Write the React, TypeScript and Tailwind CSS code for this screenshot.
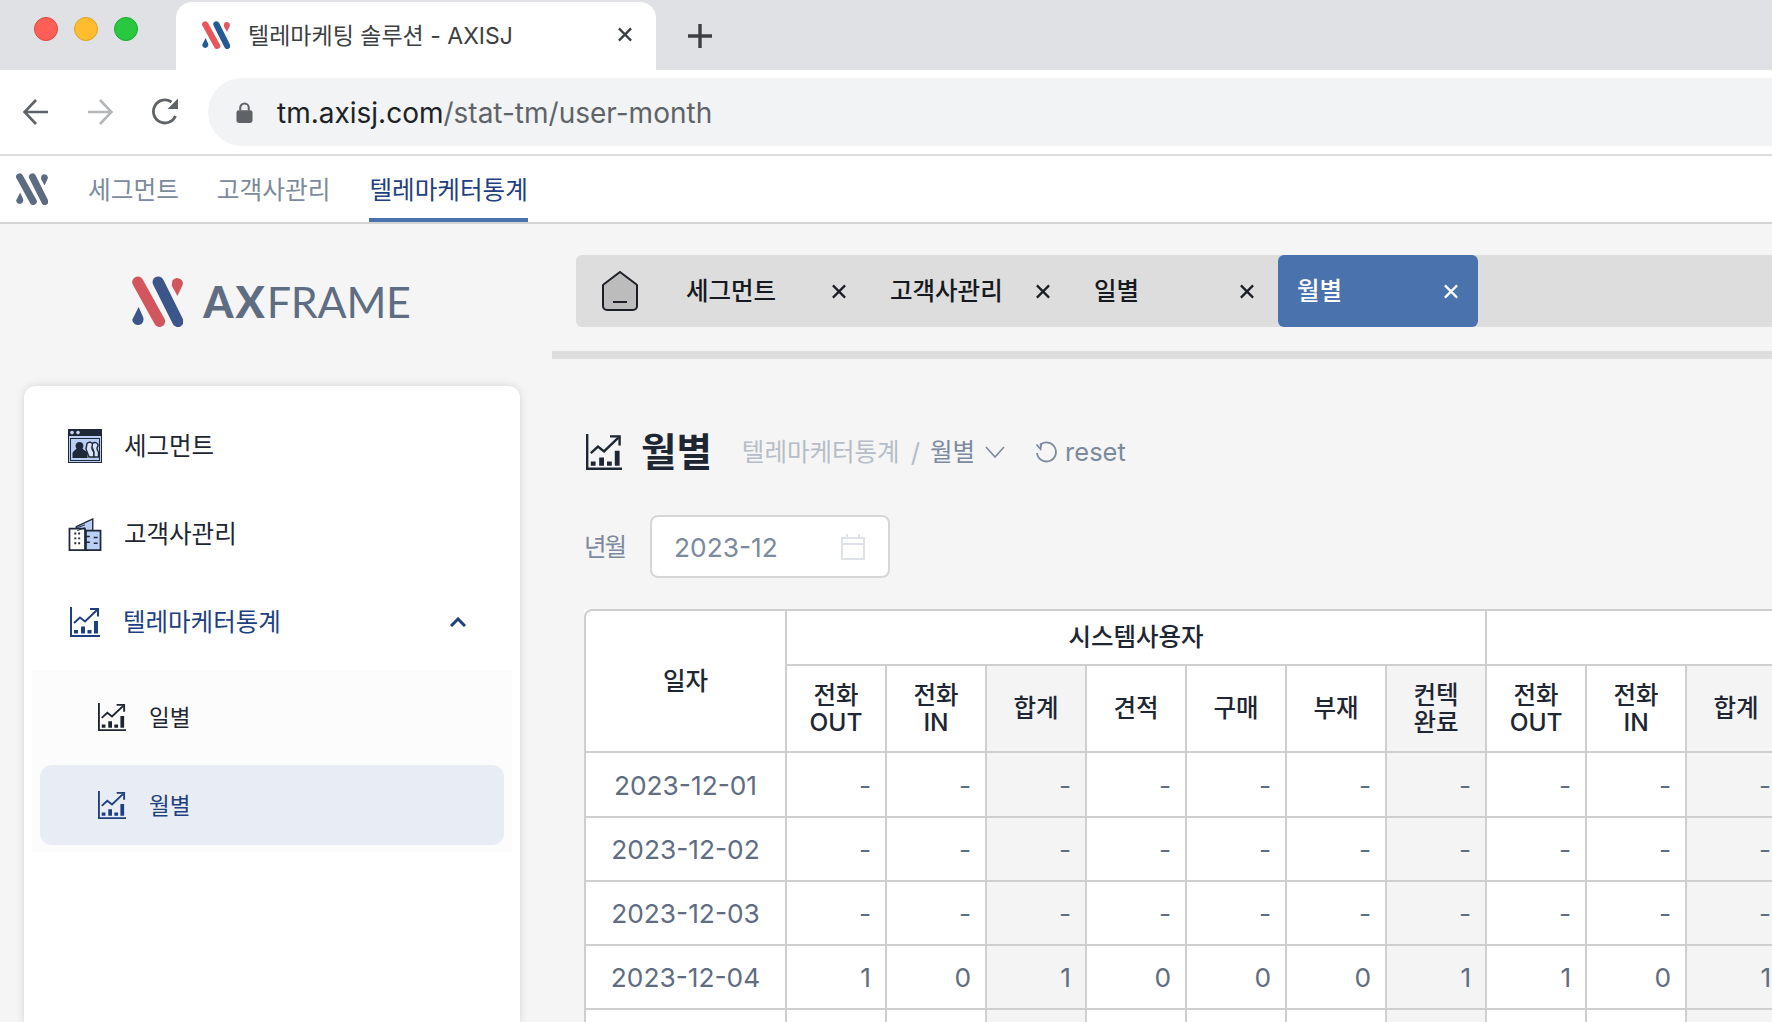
import React from "react";

const FONT = "font-[Inter,'Noto_Sans_CJK_KR',sans-serif]";

function LogoMark({ className, a, b }: { className?: string; a: string; b: string }) {
  return (
    <svg viewBox="0 0 50 50" className={className}>
      <line x1="5.7" y1="6" x2="27" y2="44.5" stroke={a} strokeWidth="11" strokeLinecap="round" />
      <line x1="25.7" y1="6" x2="45" y2="44.5" stroke={b} strokeWidth="11" strokeLinecap="round" />
      <path d="M39.6 4.5a5.6 5.6 0 0 1 10.2 3.8L44.6 19.5 39 9.5z" fill={a} />
      <path d="M6.5 30.5 10.8 40a5.6 5.6 0 1 1-10.6 3z" fill={b} />
    </svg>
  );
}

function ChartIcon({ className }: { className?: string }) {
  return (
    <svg viewBox="0 0 30 30" fill="none" stroke="currentColor" className={className}>
      <path d="M1 0V29H30" strokeWidth="2" />
      <path d="M4 16 10 10.500 15 14.500 27 3" strokeWidth="2" />
      <path d="M20 2H28V9.500" strokeWidth="2" />
      <path d="M4 23h4v3.500H4zM11 19.500h4v7h-4zM17.500 23h4v3.500h-4zM24 14h4v12.500h-4z" fill="currentColor" stroke="none" />
    </svg>
  );
}

function SegmentIcon() {
  return (
    <svg viewBox="0 0 34 34" className="h-[34px] w-[34px]">
      <rect x="0.500" y="0.500" width="33" height="33" fill="#b9cff5" stroke="#1e2838" />
      <rect x="0" y="0" width="34" height="7" fill="#1e2838" />
      <circle cx="4" cy="3.600" r="1.800" fill="#c9d6ee" />
      <circle cx="10" cy="3.600" r="1.800" fill="#c9d6ee" />
      <rect x="2.500" y="9.500" width="29" height="22" fill="none" stroke="#1e2838" strokeWidth="1" />
      <path d="M19 14.500a3.500 3.500 0 0 1 6 1c.3 2-1 2.500-1 4 0 2 2 2.500 2 4.500v4h-5l-3-8z" fill="#d9e4fa" stroke="#1e2838" strokeWidth="1.400" />
      <path d="M24.500 14.500a3.500 3.500 0 0 1 5.500 1c.3 2-1 2.500-1 4 0 2 1.500 2.500 1.500 4.500v4H26v-5l-2-5z" fill="#d9e4fa" stroke="#1e2838" strokeWidth="1.400" />
      <path d="M4.500 29v-5c0-1.500 3-3 4-4.500-1.500-1.500-1.500-6.500 3-6.500 4.500 0 4.500 5 3 6.500 1 1.500 5 3 5 4.500v5z" fill="#1e2838" />
    </svg>
  );
}

function BuildingIcon() {
  return (
    <svg viewBox="0 0 34 34" className="h-[33px] w-[34px]">
      <path d="M8 9 25 1v32H8z" fill="#b9cff5" stroke="#1e2838" strokeWidth="1.400" />
      <path d="M1 33V11h16v22z" fill="#ffffff" stroke="#1e2838" strokeWidth="1.800" />
      <path d="M18 13h15v20H18z" fill="#b9cff5" stroke="#1e2838" strokeWidth="1.800" />
      <path d="M6 15h2v2H6zM10 15h2v2h-2zM6 20h2v2H6zM10 20h2v2h-2zM6 25h2v2H6zM10 25h2v2h-2z" fill="#1e2838" />
      <path d="M18 19h4M18 25h4M26 20h4M26 26h4" stroke="#1e2838" strokeWidth="1.600" />
      <path d="M9 10l8-3M9 13l8-3" stroke="#1e2838" strokeWidth="1" />
    </svg>
  );
}

function CloseIcon({ color = "#1a1d24" }: { color?: string }) {
  return (
    <svg viewBox="0 0 16 16" className="h-[15px] w-[16px]" fill="none" stroke={color} strokeWidth="2.400">
      <path d="M1.500 1.500 14.500 14.500M14.500 1.500 1.500 14.500" />
    </svg>
  );
}

function BrowserBar() {
  return (
    <>
      <div className="flex h-[70px] items-start bg-[#dfe1e5]">
        <div className="flex w-[176px] items-center gap-4 pl-[34px] pt-[17px]">
          <span className="h-6 w-6 rounded-full border border-[#e0443e] bg-[#ff5f57]" />
          <span className="h-6 w-6 rounded-full border border-[#dea123] bg-[#febc2e]" />
          <span className="h-6 w-6 rounded-full border border-[#1aab29] bg-[#28c840]" />
        </div>
        <div className="mt-[2px] flex h-[68px] w-[480px] items-center rounded-t-2xl bg-white pb-[3px] pl-[26px] pr-[23px]">
          <LogoMark className="h-[28px] w-[28px]" a="#e8555a" b="#235b96" />
          <span className="ml-[18px] flex-1 pt-[3px] text-[23px] text-[#3c4043]">텔레마케팅 솔루션 - AXISJ</span>
          <CloseIcon color="#3c4043" />
        </div>
        <svg viewBox="0 0 24 24" className="ml-[32px] mt-[24px] h-6 w-6" fill="none" stroke="#3c4043" strokeWidth="3.400">
          <path d="M12 0V24M0 12H24" />
        </svg>
      </div>
      <div className="flex h-[86px] items-center border-b-2 border-[#dcdcdc] bg-white">
        <svg viewBox="0 0 26 26" className="ml-[23px] h-[26px] w-[26px]" fill="none" stroke="#5f6368" strokeWidth="2.600">
          <path d="M25 13H2M13 1 1.500 13 13 25" />
        </svg>
        <svg viewBox="0 0 26 26" className="ml-[38px] h-[26px] w-[26px]" fill="none" stroke="#b4b6b9" strokeWidth="2.600">
          <path d="M1 13H24M13 1 24.500 13 13 25" />
        </svg>
        <svg viewBox="0 0 28 28" className="ml-[38px] h-[28px] w-[28px]" fill="none" stroke="#5f6368" strokeWidth="2.800">
          <path d="M24.500 18A11.500 11.500 0 1 1 20.500 4" />
          <path d="M27 0.500V11H16.500z" fill="#5f6368" stroke="none" />
        </svg>
        <div className="ml-[29px] flex h-[68px] flex-1 items-center rounded-l-full bg-[#f1f3f4] pl-[28px]">
          <svg viewBox="0 0 18 22" className="h-[21px] w-[17px]">
            <path d="M4.500 9V6a4.500 4.500 0 0 1 9 0v3" fill="none" stroke="#5f6368" strokeWidth="2.200" />
            <rect x="0.500" y="8.500" width="17" height="13.500" rx="2.500" fill="#5f6368" />
          </svg>
          <span className="ml-[24px] pt-[1px] text-[28px] text-[#202124]">
            tm.axisj.com<span className="text-[#5f6368]">/stat-tm/user-month</span>
          </span>
        </div>
      </div>
    </>
  );
}

function TopNav() {
  return (
    <div className="flex h-[68px] items-stretch border-b-2 border-[#d4d4d4] bg-white">
      <LogoMark className="ml-[16px] mt-[17px] h-[32px] w-[32px]" a="#5d6b80" b="#5d6b80" />
      <div className="ml-[40px] flex items-center pt-[3px] text-[24.700px] text-[#7c8a9e]">세그먼트</div>
      <div className="ml-[38px] flex items-center pt-[3px] text-[24.700px] text-[#7c8a9e]">고객사관리</div>
      <div className="ml-[39px] flex items-center border-b-4 border-[#4a72ac] pt-[6px] text-[24.600px] text-[#1e4080]">텔레마케터통계</div>
    </div>
  );
}

function Sidebar() {
  return (
    <aside className="flex w-[552px] shrink-0 flex-col">
      <div className="flex h-[162px] shrink-0 items-center justify-center pb-[8px] pr-[9px]">
        <LogoMark className="h-[51px] w-[51px]" a="#d2565d" b="#3c5689" />
        <span className="ml-5 font-['Lato',sans-serif] text-[43px] leading-none tracking-[-0.2px] text-[#5f6d82]">
          <span className="font-black tracking-[2px]">AX</span>FRAME
        </span>
      </div>
      <div className="ml-6 flex w-[496px] flex-1 flex-col rounded-t-xl bg-white pt-4 shadow-[0_0_8px_rgba(0,0,0,0.14)]">
        <div className="flex h-[88px] items-center pl-11 text-[24.500px] text-[#1e2633]">
          <SegmentIcon />
          <span className="ml-[22px]">세그먼트</span>
        </div>
        <div className="flex h-[88px] items-center pl-11 text-[24.500px] text-[#1e2633]">
          <BuildingIcon />
          <span className="ml-[22px]">고객사관리</span>
        </div>
        <div className="flex h-[88px] items-center pl-[46px] pr-[54px] text-[24.500px] text-[#1e4080]">
          <ChartIcon className="h-[30px] w-[30px]" />
          <span className="ml-[23px] flex-1">텔레마케터통계</span>
          <svg viewBox="0 0 16 10" className="h-[10px] w-[16px]" fill="none" stroke="#1e4080" strokeWidth="3">
            <path d="M1 9 8 2l7 7" />
          </svg>
        </div>
        <div className="mx-2 mt-1 flex flex-col gap-2 bg-[#fcfcfc] px-2 py-[7px] text-[22.500px]">
          <div className="flex h-20 items-center rounded-xl pl-[58px] text-[#1e2633]">
            <ChartIcon className="h-[28px] w-[28px]" />
            <span className="ml-[23px] pt-[2px]">일별</span>
          </div>
          <div className="flex h-20 items-center rounded-xl bg-[#e8ecf4] pl-[58px] text-[#1e4080]">
            <ChartIcon className="h-[28px] w-[28px]" />
            <span className="ml-[23px] pt-[2px]">월별</span>
          </div>
        </div>
      </div>
    </aside>
  );
}

function PageTab({ label, active }: { label: string; active?: boolean }) {
  return (
    <div
      className={
        active
          ? "flex h-full w-[200px] shrink-0 items-center justify-between rounded-md bg-[#4a72ac] pl-[19px] pr-[19px] text-[24.500px] font-medium text-white"
          : "flex h-full w-[200px] shrink-0 items-center justify-between pl-[20px] pr-[19px] text-[24.500px] font-medium text-[#16191f]"
      }
    >
      <span>{label}</span>
      <CloseIcon color={active ? "#ffffff" : "#1a1d24"} />
    </div>
  );
}

const COLS = ["date", "a", "b", "c", "d", "e", "f", "g", "h", "i", "j"];

const ROWS: { date: string; v: string[] }[] = [
  { date: "2023-12-01", v: ["-", "-", "-", "-", "-", "-", "-", "-", "-", "-"] },
  { date: "2023-12-02", v: ["-", "-", "-", "-", "-", "-", "-", "-", "-", "-"] },
  { date: "2023-12-03", v: ["-", "-", "-", "-", "-", "-", "-", "-", "-", "-"] },
  { date: "2023-12-04", v: ["1", "0", "1", "0", "0", "0", "1", "1", "0", "1"] },
  { date: "", v: ["", "", "", "", "", "", "", "", "", ""] },
];

const SHADED = [2, 6, 9];
const HEADERS = ["전화\nOUT", "전화\nIN", "합계", "견적", "구매", "부재", "컨텍\n완료", "전화\nOUT", "전화\nIN", "합계"];

function DataTable() {
  const line = "border-[#cfcfcf] border-r-2 border-b-2";
  return (
    <table className="mt-[31px] w-[1203px] table-fixed border-separate border-spacing-0 bg-white text-[24.500px] text-[#1e2633]">
      <colgroup>
        {COLS.map((c, i) => (
          <col key={c} className={i === 0 ? "w-[203px]" : "w-[100px]"} />
        ))}
      </colgroup>
      <thead>
        <tr className="h-[57px]">
          <th rowSpan={2} className={`${line} rounded-tl-lg border-l-2 border-t-2 font-medium`}>일자</th>
          <th colSpan={7} className={`${line} border-t-2 font-medium`}>시스템사용자</th>
          <th colSpan={3} className={`${line} border-t-2 font-medium`}></th>
        </tr>
        <tr className="h-[87px]">
          {HEADERS.map((h, i) => (
            <th
              key={i}
              className={`${line} whitespace-pre-line font-medium leading-[27px] ${SHADED.includes(i) ? "bg-[#f4f4f4]" : ""}`}
            >
              {h}
            </th>
          ))}
        </tr>
      </thead>
      <tbody className="text-[26.300px] text-[#5f6d82]">
        {ROWS.map((r, ri) => (
          <tr key={ri} className={ri === 0 ? "h-[65px]" : "h-[64px]"}>
            <td className={`${line} border-l-2 pt-[2px] text-center`}>{r.date}</td>
            {r.v.map((v, i) => (
              <td key={i} className={`${line} pr-[14px] pt-[2px] text-right ${SHADED.includes(i) ? "bg-[#f4f4f4]" : ""}`}>
                {v}
              </td>
            ))}
          </tr>
        ))}
      </tbody>
    </table>
  );
}

function Main() {
  return (
    <main className="min-w-0 flex-1 overflow-hidden pt-[31px]">
      <div className="ml-6 flex h-[72px] items-center gap-1 rounded-l-md bg-[#dddddd]">
        <div className="flex h-full w-[86px] shrink-0 items-center pl-[26px]">
          <svg viewBox="0 0 36 40" className="h-[40px] w-[36px]">
            <path d="M18 1 34.500 13.500a1 1 0 0 1 .5 1V35a4 4 0 0 1-4 4H5a4 4 0 0 1-4-4V14.500a1 1 0 0 1 .5-1z" fill="#bcbcbc" stroke="#1c1f26" strokeWidth="2" />
            <path d="M11 31H25" stroke="#1c1f26" strokeWidth="2" />
          </svg>
        </div>
        <PageTab label="세그먼트" />
        <PageTab label="고객사관리" />
        <PageTab label="일별" />
        <PageTab label="월별" active />
      </div>
      <div className="mt-6 h-2 bg-[#dddddd]" />
      <div className="pl-8">
        <div className="mt-[73px] flex h-10 items-center text-[#5f6d82]">
          <ChartIcon className="ml-[2px] h-[36px] w-[36px] text-[#1e2633]" />
          <h1 className="ml-[19px] text-[38.500px] font-bold leading-none text-[#1e2633]">월별</h1>
          <span className="ml-[30px] text-[24.500px] text-[#b6bdc7]">텔레마케터통계</span>
          <span className="ml-[11px] text-[26px] text-[#b6bdc7]">/</span>
          <span className="ml-[10px] text-[24.500px] text-[#7c8a9e]">월별</span>
          <svg viewBox="0 0 20 12" className="ml-[10px] h-[12px] w-[20px]" fill="none" stroke="#7c8a9e" strokeWidth="1.600">
            <path d="M1 1 10 11 19 1" />
          </svg>
          <svg viewBox="0 0 22 22" className="ml-[30px] h-[22px] w-[22px]" fill="none" stroke="#7c8a9e" strokeWidth="1.800">
            <path d="M5 4a9.500 9.500 0 1 1-3 8" />
            <path d="M1.500 3.500 5.500 8 6.500 2" />
          </svg>
          <span className="ml-[8px] text-[25.500px] text-[#7c8a9e]">reset</span>
        </div>
        <div className="mt-[43px] flex h-[63px] items-center">
          <label className="w-[66px] pt-[2px] text-[24.500px] tracking-[-2px] text-[#7c8a9e]">년월</label>
          <div className="flex h-full w-[240px] items-center justify-between rounded-lg border-2 border-[#d6d6d6] bg-white pl-[22px] pr-[23px]">
            <span className="pt-[3px] text-[26.300px] text-[#7c8a9e]">2023-12</span>
            <svg viewBox="0 0 24 26" className="h-[26px] w-[24px]" fill="none" stroke="#dfe2e8" strokeWidth="2">
              <path d="M1 4H23V25H1zM1 10H23M6 0V4M18 0V4" />
            </svg>
          </div>
        </div>
        <DataTable />
      </div>
    </main>
  );
}

export default function App() {
  return (
    <div className={`flex h-[1022px] w-[1772px] flex-col overflow-hidden bg-[#f5f5f5] ${FONT}`}>
      <BrowserBar />
      <TopNav />
      <div className="flex min-h-0 flex-1">
        <Sidebar />
        <Main />
      </div>
    </div>
  );
}
